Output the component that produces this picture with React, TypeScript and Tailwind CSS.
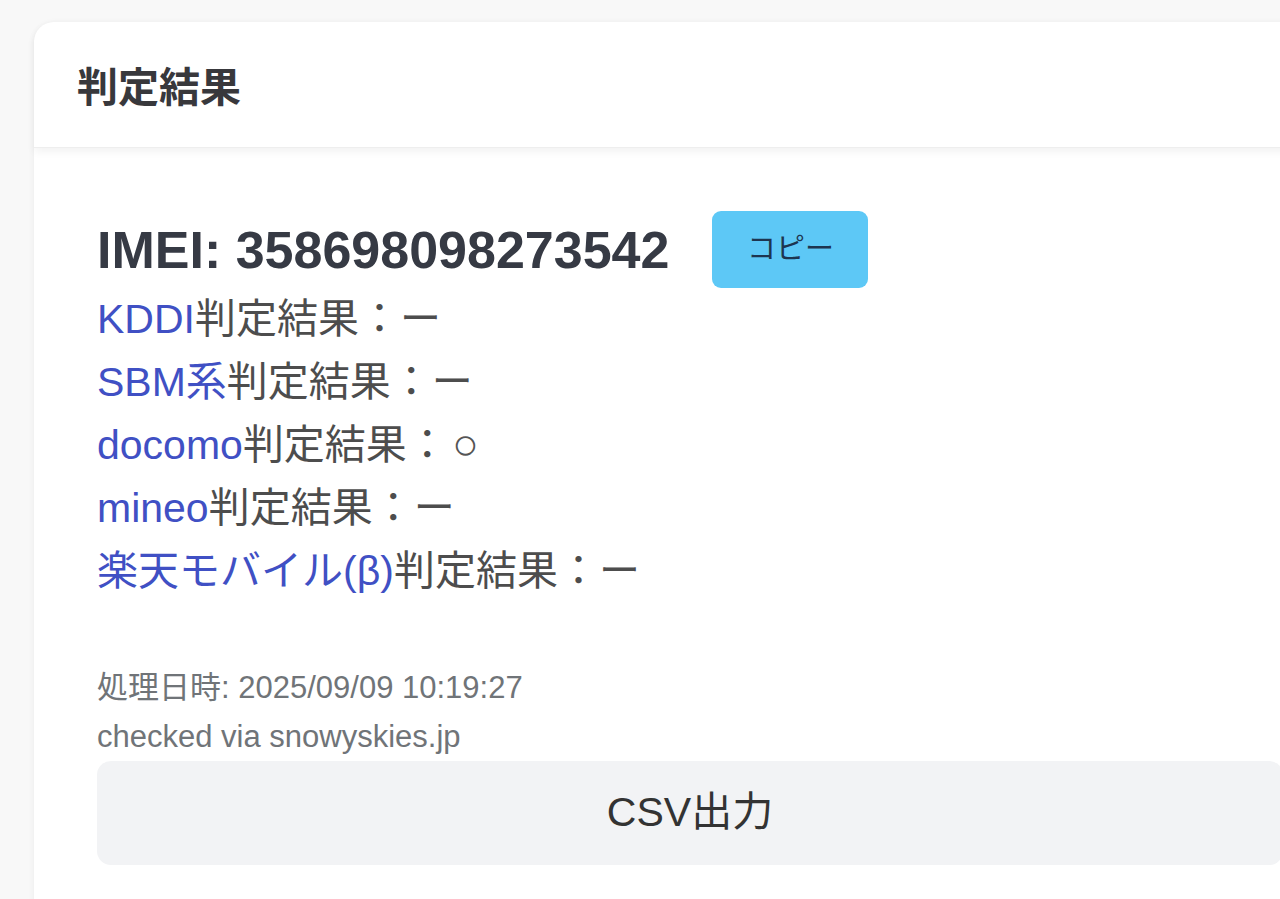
import React from "react";

interface ResultRow {
    carrier: string;
    mark: string;
}

const rows: ResultRow[] = [
    { carrier: "KDDI", mark: "ー" },
    { carrier: "SBM系", mark: "ー" },
    { carrier: "docomo", mark: "○" },
    { carrier: "mineo", mark: "ー" },
    { carrier: "楽天モバイル(β)", mark: "ー" },
];

const font = "font-['Liberation_Sans','Noto_Sans_CJK_JP',sans-serif]";

const ResultLine = ({ carrier, mark }: ResultRow) => (
    <div className="text-[41px] leading-[63px] text-[#4d4d4d]">
        <a href="#" className="text-[#4050c4]">{carrier}</a>
        <span>判定結果：</span>
        {mark === "○" ? (
            <span className="ml-[4px] text-[44px] leading-[0] text-[#555]">○</span>
        ) : (
            <span>{mark}</span>
        )}
    </div>
);

export default function App() {
    return (
        <div className={`h-screen overflow-hidden bg-[#f8f8f8] pt-[22px] pl-[34px] ${font}`}>
            <div className="w-[1312px] rounded-t-[20px] bg-white shadow-[0_1px_6px_rgba(0,0,0,0.06)]">
                <div className="flex h-[126px] items-center rounded-t-[20px] border-b border-[#eeeeee] px-[43px] shadow-[0_4px_8px_rgba(0,0,0,0.05)]">
                    <h2 className="text-[41px] font-bold text-[#38383c] font-['Noto_Sans_CJK_JP',sans-serif]">判定結果</h2>
                </div>
                <div className="px-[63px] pt-[63px] pb-[40px]">
                    <div className="flex items-center gap-[43px]">
                        <h3 className="text-[52px] font-bold text-[#363a44] leading-none">IMEI: 358698098273542</h3>
                        <button className="h-[77px] w-[156px] rounded-[9px] bg-[#5dc8f6] text-[29px] text-[#1d3550]">
                            コピー
                        </button>
                    </div>
                    <div>
                        {rows.map((r) => (
                            <ResultLine key={r.carrier} carrier={r.carrier} mark={r.mark} />
                        ))}
                    </div>
                    <div className="mt-[60px] text-[31px] leading-[49px] text-[#707478]">
                        <div>処理日時: 2025/09/09 10:19:27</div>
                        <div>checked via snowyskies.jp</div>
                    </div>
                    <button className="h-[104px] w-full rounded-[14px] bg-[#f2f3f5] text-[41px] text-[#333]">
                        CSV出力
                    </button>
                </div>
            </div>
        </div>
    );
}
